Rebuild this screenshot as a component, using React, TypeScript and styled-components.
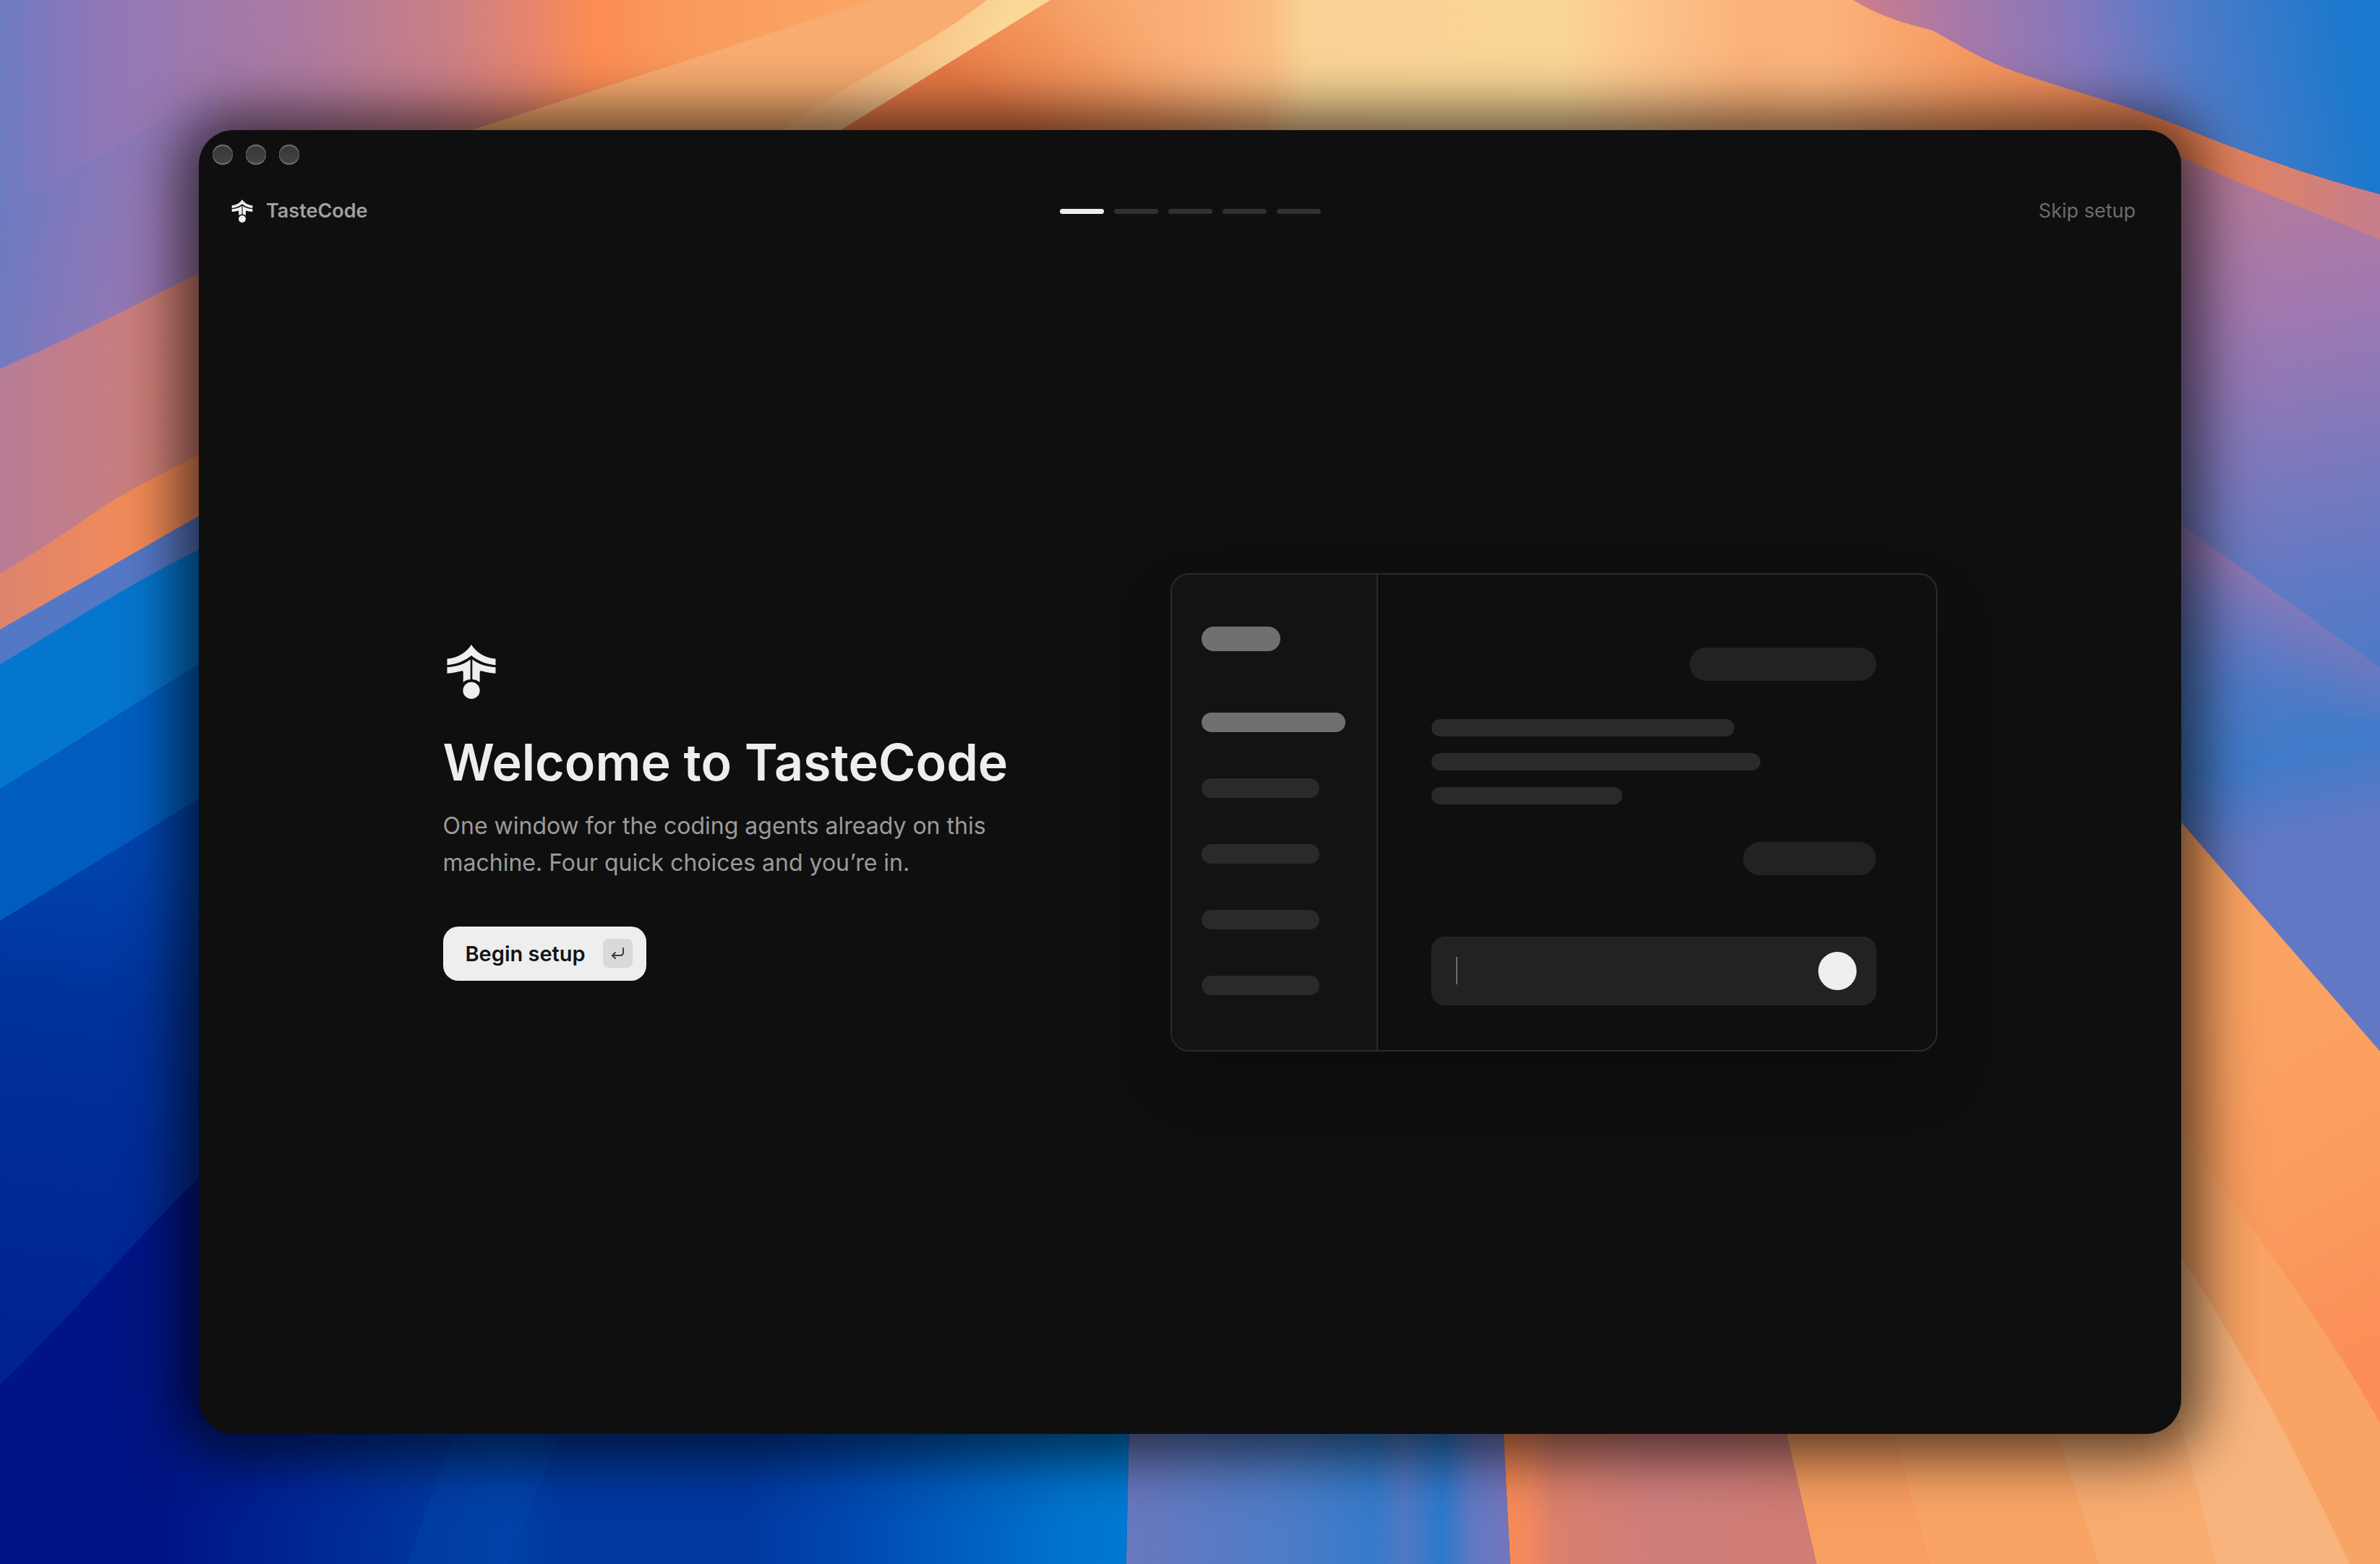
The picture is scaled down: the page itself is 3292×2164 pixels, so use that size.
import React from "react";
import styled, { createGlobalStyle } from "styled-components";

const GlobalStyle = createGlobalStyle`
  *, *::before, *::after { box-sizing: border-box; }
  body { margin: 0; background: #0d2f8c; }
  button { font: inherit; border: 0; padding: 0; cursor: pointer; }
  h1, p { margin: 0; }
`;

const Desktop = styled.div`
  position: relative;
  isolation: isolate;
  display: grid;
  min-height: 100vh;
  padding: 180px 275px;
  font-family: Inter, "Liberation Sans", sans-serif;
`;

const WallpaperArt = styled.svg`
  position: absolute;
  inset: 0;
  z-index: -1;
  width: 100%;
  height: 100%;
`;

const Window = styled.div`
  display: flex;
  flex-direction: column;
  border-radius: 48px;
  background: #0f0f0f;
  color: #eeeeee;
  box-shadow: 0 4px 76px 30px rgba(0, 0, 0, 0.62);
`;

const TitleBar = styled.div`
  display: flex;
  align-items: center;
  gap: 18px;
  height: 68px;
  padding: 0 19px;
`;

const TrafficLight = styled.button`
  width: 28px;
  height: 28px;
  border-radius: 50%;
  background: linear-gradient(#363636, #444444);
  box-shadow: inset 0 2px 1px #707070, inset 0 -2px 1px #707070,
    inset 0 0 1px 1px #444444;
`;

const Header = styled.header`
  display: grid;
  grid-template-columns: 1fr auto 1fr;
  align-items: center;
  height: 88px;
  padding: 0 45px;
  font-size: 27px;
  line-height: 32px;
`;

const Brand = styled.div`
  display: flex;
  align-items: center;
  gap: 18px;
  color: #a0a0a0;
  font-weight: 600;
`;

const LogoArt = styled.svg<{ $width: number; $height: number }>`
  display: block;
  flex: none;
  width: ${(p) => p.$width}px;
  height: ${(p) => p.$height}px;
  fill: #eeeeee;
`;

const Steps = styled.ol`
  display: flex;
  gap: 14px;
  margin: 0;
  padding: 0;
  list-style: none;
`;

const Step = styled.li<{ $active?: boolean }>`
  width: 61px;
  height: 7px;
  border-radius: 4px;
  background: ${(p) => (p.$active ? "#eeeeee" : "#303030")};
`;

const SkipButton = styled.button`
  justify-self: end;
  background: none;
  color: #6c6c6c;
  && {
    padding: 8px 18px;
  }
`;

const Main = styled.main`
  flex: 1;
  display: grid;
  place-items: center;
  padding: 0 64px 72px;
`;

const Welcome = styled.div`
  display: grid;
  grid-template-columns: minmax(0, 1fr) minmax(0, 1061px);
  gap: 64px;
  align-items: center;
  width: 100%;
  max-width: 2067px;
`;

const Intro = styled.section`
  display: flex;
  flex-direction: column;
  align-items: flex-start;
`;

const HeroLogo = styled.div`
  padding: 0 5px;
`;

const Title = styled.h1`
  margin-top: 44px;
  font-size: 70px;
  line-height: 88px;
  font-weight: 600;
  white-space: nowrap;
`;

const Lead = styled.p`
  max-width: 780px;
  margin-top: 18px;
  color: #9b9b9b;
  font-size: 32px;
  line-height: 51px;
`;

const BeginButton = styled.button`
  display: flex;
  align-items: center;
  gap: 24px;
  height: 75px;
  margin-top: 63px;
  && {
    padding: 0 19px 0 31px;
    font-size: 29px;
    font-weight: 600;
  }
  border-radius: 21px;
  background: #eeeeee;
  color: #141414;
`;

const KeyCap = styled.kbd`
  display: grid;
  place-items: center;
  width: 41px;
  height: 40px;
  border-radius: 8px;
  background: #d9d9d9;
`;

const Preview = styled.div`
  display: grid;
  grid-template-columns: 285px minmax(0, 1fr);
  height: 662px;
  overflow: hidden;
  border: 2px solid #2b2b2b;
  border-radius: 26px;
  background: #0f0f0f;
  box-shadow: 0 40px 80px rgba(0, 0, 0, 0.2);
`;

const PreviewSidebar = styled.div`
  display: flex;
  flex-direction: column;
  gap: 64px;
  padding: 72px 41px;
  border-right: 2px solid #2b2b2b;
  background: #131313;
`;

const Bar = styled.div<{ $width: number; $height: number; $tone: string }>`
  flex: none;
  width: ${(p) => p.$width}px;
  height: ${(p) => p.$height}px;
  border-radius: 24px;
  background: ${(p) => p.$tone};
`;

const SidebarHeading = styled.div`
  padding-bottom: 21px;
`;

const PreviewChat = styled.div`
  display: flex;
  flex-direction: column;
  justify-content: space-between;
  padding: 101px 83px 62px 74px;
`;

const Sent = styled.div`
  display: flex;
  justify-content: flex-end;
`;

const Reply = styled.div`
  display: flex;
  flex-direction: column;
  gap: 23px;
`;

const Composer = styled.div`
  display: flex;
  align-items: center;
  justify-content: space-between;
  height: 95px;
  margin-top: 32px;
  padding: 0 26px 0 33px;
  border: 1px solid #272727;
  border-radius: 18px;
  background: #222222;
`;

const Caret = styled.span`
  width: 2px;
  height: 38px;
  background: #6e6e6e;
`;

const SendDot = styled.span`
  width: 53px;
  height: 53px;
  border-radius: 50%;
  background: #eeeeee;
`;

function Logo({ width, height }: { width: number; height: number }) {
  return (
    <LogoArt $width={width} $height={height} viewBox="54 38 204 226" aria-hidden="true">
      <path d="M156 38C138 66 105 93 55 97V123C98 119 134 102 156 83C178 102 214 119 257 123V97C207 93 174 66 156 38Z" />
      <path d="M152 100C130 117 98 131 55 132V158C81 157 101 150 116 147Q122 146 122 152V195C130 189 138 184 152 183Z" />
      <path d="M160 100C182 117 214 131 257 132V158C231 157 211 150 197 147Q191 146 191 152V195C182 189 174 184 160 183Z" />
      <circle cx="156" cy="229" r="35" />
    </LogoArt>
  );
}

type Stops = [number, string][];

function Gradient({ id, stops }: { id: string; stops: Stops }) {
  return (
    <linearGradient id={id} gradientUnits="userSpaceOnUse" x1="0" y1="0" x2="1568" y2="0">
      {stops.map(([at, color]) => (
        <stop key={at} offset={at / 1568} stopColor={color} />
      ))}
    </linearGradient>
  );
}

function Wallpaper() {
  return (
    <WallpaperArt viewBox="0 0 1568 1031" preserveAspectRatio="none" aria-hidden="true">
      <defs>
        <Gradient
          id="top"
          stops={[[0, "#6c7cc2"], [30, "#8079bd"], [80, "#9378b6"], [200, "#ad7aa0"], [290, "#c97f88"], [350, "#e6856c"], [390, "#fc8c54"], [450, "#f99a5c"], [560, "#fba564"]]}
        />
        <linearGradient id="leftHaze" gradientUnits="userSpaceOnUse" x1="0" y1="180" x2="110" y2="215">
          <stop offset="0" stopColor="#7079c0" stopOpacity="0.6" />
          <stop offset="1" stopColor="#9c78b0" stopOpacity="0.5" />
        </linearGradient>
        <Gradient
          id="centre"
          stops={[[560, "#f69c60"], [690, "#f4a066"], [800, "#fbb27a"], [835, "#fabd82"], [862, "#f9d396"], [1030, "#f9d596"], [1060, "#fccb90"], [1150, "#fbb27a"], [1200, "#fbb47c"], [1300, "#f59860"], [1440, "#e78052"]]}
        />
        <linearGradient id="centreGlow" gradientUnits="userSpaceOnUse" x1="760" y1="0" x2="690" y2="95">
          <stop offset="0" stopColor="#f9b47c" stopOpacity="0" />
          <stop offset="0.5" stopColor="#f08c54" stopOpacity="0.5" />
          <stop offset="1" stopColor="#e4703e" stopOpacity="0.8" />
        </linearGradient>
        <linearGradient id="cream" gradientUnits="userSpaceOnUse" x1="560" y1="20" x2="650" y2="50">
          <stop offset="0" stopColor="#f8b67c" />
          <stop offset="0.6" stopColor="#f9c88c" />
          <stop offset="1" stopColor="#fad898" />
        </linearGradient>
        <linearGradient id="topRight" gradientUnits="userSpaceOnUse" x1="1230" y1="40" x2="1540" y2="-10">
          <stop offset="0" stopColor="#cc7e88" />
          <stop offset="0.2" stopColor="#a878a8" />
          <stop offset="0.45" stopColor="#8478bd" />
          <stop offset="0.68" stopColor="#4f7bc8" />
          <stop offset="1" stopColor="#1c78cc" />
        </linearGradient>
        <linearGradient id="strip" gradientUnits="userSpaceOnUse" x1="1440" y1="0" x2="1568" y2="0">
          <stop offset="0" stopColor="#e98052" />
          <stop offset="0.4" stopColor="#dc8268" />
          <stop offset="1" stopColor="#c67e8c" />
        </linearGradient>
        <linearGradient id="rightSky" gradientUnits="userSpaceOnUse" x1="1440" y1="100" x2="1530" y2="550">
          <stop offset="0" stopColor="#bc7c94" />
          <stop offset="0.25" stopColor="#a178b0" />
          <stop offset="0.5" stopColor="#7879be" />
          <stop offset="0.65" stopColor="#5e79c4" />
          <stop offset="0.88" stopColor="#407bc9" />
          <stop offset="1" stopColor="#6278c4" />
        </linearGradient>
        <linearGradient id="streakFade" gradientUnits="userSpaceOnUse" x1="1470" y1="372" x2="1440" y2="440">
          <stop offset="0" stopColor="#a878b0" stopOpacity="0.6" />
          <stop offset="1" stopColor="#7078c0" stopOpacity="0" />
        </linearGradient>
        <linearGradient id="leftPink" gradientUnits="userSpaceOnUse" x1="0" y1="0" x2="131" y2="0">
          <stop offset="0" stopColor="#b87c98" />
          <stop offset="1" stopColor="#d4806f" />
        </linearGradient>
        <linearGradient id="leftOrange" gradientUnits="userSpaceOnUse" x1="0" y1="0" x2="90" y2="0">
          <stop offset="0" stopColor="#dc846e" />
          <stop offset="1" stopColor="#f38b58" />
        </linearGradient>
        <linearGradient id="deepBlue" gradientUnits="userSpaceOnUse" x1="60" y1="560" x2="20" y2="880">
          <stop offset="0" stopColor="#0043ac" />
          <stop offset="0.3" stopColor="#00339c" />
          <stop offset="1" stopColor="#002390" />
        </linearGradient>
        <Gradient
          id="floor"
          stops={[[0, "#001585"], [110, "#001585"], [180, "#002292"], [290, "#00389e"], [335, "#0040a6"], [372, "#00389e"], [490, "#00389f"], [560, "#0048b0"], [640, "#0060c0"], [700, "#0072cc"], [744, "#0079d2"]]}
        />
        <Gradient
          id="dusk"
          stops={[[744, "#6878be"], [850, "#4c7cc8"], [905, "#347bca"], [925, "#5079c4"], [950, "#2c79cb"], [970, "#6078c4"], [992, "#7476bc"]]}
        />
        <Gradient
          id="ember"
          stops={[[990, "#fa8c54"], [1008, "#f08860"], [1025, "#da806c"], [1090, "#d07e7c"], [1190, "#d07d74"]]}
        />
        <linearGradient id="rightOrange" gradientUnits="userSpaceOnUse" x1="1440" y1="680" x2="1568" y2="900">
          <stop offset="0" stopColor="#fba362" />
          <stop offset="0.5" stopColor="#fa9c5f" />
          <stop offset="1" stopColor="#fb8d56" />
        </linearGradient>
      </defs>

      <rect width="784" height="600" fill="url(#top)" />
      <path d="M0 140L140 60V300H0Z" fill="url(#leftHaze)" />
      <path d="M575 0L310 86V120H800V0Z" fill="#f8ac70" />
      <path d="M650 0C600 40 540 60 500 100H570L700 0Z" fill="url(#cream)" />
      <path d="M692 0L547 90V110H1568V0Z" fill="url(#centre)" />
      <path d="M692 0L547 90V110H830L850 0Z" fill="url(#centreGlow)" />

      <path d="M1221 0C1240 12 1258 16 1273 20C1290 29 1306 40 1330 48C1358 58 1410 72 1438 84C1480 102 1530 118 1568 128V0Z" fill="url(#topRight)" />
      <path d="M1400 80L1438 84C1480 102 1530 118 1568 128V165L1430 110Z" fill="url(#strip)" />
      <path d="M1430 100C1480 124 1530 141 1568 158V720L1430 540Z" fill="url(#rightSky)" />
      <path d="M1430 341L1568 440V475L1430 455Z" fill="url(#streakFade)" />
      <path d="M1430 534L1568 693V1031H1180V940H1430Z" fill="url(#rightOrange)" />
      <path d="M1430 733C1480 806 1530 870 1568 938V1031H1177V940H1430Z" fill="#f9a364" />
      <path d="M1430 818C1475 885 1515 960 1548 1031H1353L1340 940H1430Z" fill="#f8b47c" />

      <path d="M0 243C50 222 90 200 140 176V360L0 420Z" fill="url(#leftPink)" />
      <path d="M0 378C35 358 55 342 76 329C100 315 120 306 140 295V350L0 420Z" fill="url(#leftOrange)" />
      <path d="M0 415L140 335V380L0 450Z" fill="#5578c6" />
      <path d="M0 438C50 408 90 382 140 358V450L0 530Z" fill="#0576ce" />
      <path d="M0 520L140 432V540L0 620Z" fill="#005dbf" />
      <path d="M0 607L140 521V800L0 930Z" fill="url(#deepBlue)" />
      <path d="M0 913C50 865 90 815 140 768V1031H0Z" fill="#001585" />

      <path d="M110 935H744L742 1031H110Z" fill="url(#floor)" />
      <path d="M303 935H373L335 1031H268Z" fill="#0046aa" opacity="0.4" />
      <path d="M744 935H990L995 1031H742Z" fill="url(#dusk)" />
      <path d="M990 935H1175L1197 1031H995Z" fill="url(#ember)" />
      <path d="M1175 935H1245L1272 1031H1197Z" fill="#f99e61" />
      <path d="M1352 935H1436L1460 1031H1383Z" fill="#f8ac70" />
      <path d="M1245 935H1352L1383 1031H1272Z" fill="#f9a465" />
    </WallpaperArt>
  );
}

const SIDEBAR_ROWS = [163, 163, 163, 163];
const REPLY_LINES = [419, 455, 264];
const STEP_COUNT = 5;

export default function App() {
  return (
    <>
      <GlobalStyle />
      <Desktop>
        <Wallpaper />
        <Window>
          <TitleBar>
            <TrafficLight aria-label="Close" />
            <TrafficLight aria-label="Minimize" />
            <TrafficLight aria-label="Zoom" />
          </TitleBar>
          <Header>
            <Brand>
              <Logo width={30} height={32} />
              TasteCode
            </Brand>
            <Steps>
              {Array.from({ length: STEP_COUNT }, (_, index) => (
                <Step key={index} $active={index === 0} />
              ))}
            </Steps>
            <SkipButton>Skip setup</SkipButton>
          </Header>
          <Main>
            <Welcome>
              <Intro>
                <HeroLogo>
                  <Logo width={68} height={75} />
                </HeroLogo>
                <Title>Welcome to TasteCode</Title>
                <Lead>
                  One window for the coding agents already on this machine. Four quick choices and
                  you’re in.
                </Lead>
                <BeginButton>
                  Begin setup
                  <KeyCap>
                    <svg width="22" height="22" viewBox="0 0 22 22" fill="none" stroke="#3c3c3c" strokeWidth="2" strokeLinecap="round" strokeLinejoin="round" aria-hidden="true">
                      <path d="M19 4V10Q19 14 15 14H4" />
                      <path d="M8 10L4 14L8 18" />
                    </svg>
                  </KeyCap>
                </BeginButton>
              </Intro>
              <Preview aria-hidden="true">
                <PreviewSidebar>
                  <SidebarHeading>
                    <Bar $width={109} $height={34} $tone="#707070" />
                  </SidebarHeading>
                  <Bar $width={199} $height={27} $tone="#707070" />
                  {SIDEBAR_ROWS.map((width, index) => (
                    <Bar key={index} $width={width} $height={27} $tone="#2a2a2a" />
                  ))}
                </PreviewSidebar>
                <PreviewChat>
                  <Sent>
                    <Bar $width={258} $height={46} $tone="#222222" />
                  </Sent>
                  <Reply>
                    {REPLY_LINES.map((width) => (
                      <Bar key={width} $width={width} $height={24} $tone="#2a2a2a" />
                    ))}
                  </Reply>
                  <Sent>
                    <Bar $width={184} $height={46} $tone="#222222" />
                  </Sent>
                  <Composer>
                    <Caret />
                    <SendDot />
                  </Composer>
                </PreviewChat>
              </Preview>
            </Welcome>
          </Main>
        </Window>
      </Desktop>
    </>
  );
}
